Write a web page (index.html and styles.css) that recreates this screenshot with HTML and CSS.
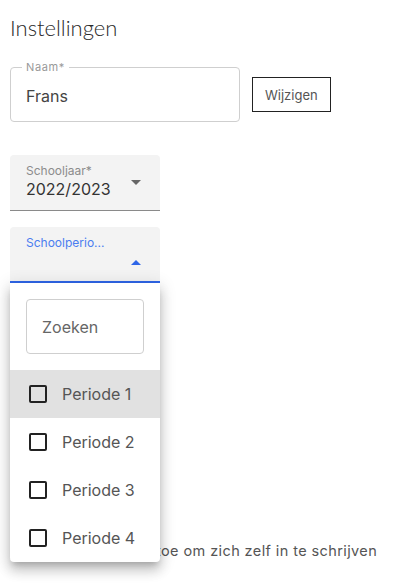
FILE: index.html
```html
<!DOCTYPE html>
<html lang="nl">
<head>
    <meta charset="UTF-8">
    <title>Instellingen</title>
    <link rel="stylesheet" href="styles.css">
</head>
<body>
    <div class="page">
        <h1 class="title">Instellingen</h1>

        <div class="name-row">
            <div class="outlined">
                <span class="outlined-label">Naam*</span>
                <div class="outlined-value">Frans</div>
            </div>
            <button class="btn">Wijzigen</button>
        </div>

        <div class="filled">
            <div class="filled-text">
                <span class="filled-label">Schooljaar*</span>
                <span class="filled-value">2022/2023</span>
            </div>
            <span class="arrow"></span>
        </div>

        <div class="select-wrap">
            <div class="filled focused">
                <div class="filled-text">
                    <span class="filled-label">Schoolperio...</span>
                </div>
                <span class="arrow up"></span>
            </div>

            <!-- open dropdown ligt over de rest -->
            <div class="panel">
                <div class="search">
                    <div class="search-box">Zoeken</div>
                </div>
                <div class="option active"><span class="check"></span>Periode 1</div>
                <div class="option"><span class="check"></span>Periode 2</div>
                <div class="option"><span class="check"></span>Periode 3</div>
                <div class="option"><span class="check"></span>Periode 4</div>
            </div>
        </div>

        <div class="toggle-row">
            <span class="check"></span>
            <span class="toggle-text">Sta leerlingen toe om zich zelf in te schrijven</span>
        </div>
    </div>
</body>
</html>
```

FILE: styles.css
```css
body{
    margin: 0;
    background: #fff;
    font-family: Inter, "Noto Sans", sans-serif;
    color: #333;
}
.page{
    padding: 0 10px 30px;
}
.title{
    margin: 0;
    padding-top: 14px;
    font-family: Lato, "Noto Sans", sans-serif;
    font-weight: 300;
    font-size: 22px;
    line-height: 28px;
    color: #2a2a2a;
}
.name-row{
    display: flex;
    align-items: center;
    gap: 12px;
    margin-top: 25px;
}
.outlined{
    position: relative;
    width: 230px;
    height: 55px;
    box-sizing: border-box;
    border: 1px solid #cfcfcf;
    border-radius: 4px;
    display: flex;
    align-items: center;
    padding: 0 15px;
}
.outlined-label{
    position: absolute;
    top: -7px;
    left: 11px;
    padding: 0 4px;
    background: #fff;
    font-size: 11px;
    line-height: 12px;
    color: #999;
    letter-spacing: 0.6px;
}
.outlined-value{
    font-size: 16px;
    color: #444;
    padding-top: 2px;
}
.btn{
    height: 35px;
    padding: 0 12px;
    border: 1px solid #222;
    background: #fff;
    font-family: Inter, "Noto Sans", sans-serif;
    font-size: 13px;
    color: #555;
    border-radius: 0;
}
.filled{
    width: 150px;
    height: 56px;
    box-sizing: border-box;
    background: #f3f3f3;
    border-radius: 4px 4px 0 0;
    border-bottom: 1px solid #8a8a8a;
    display: flex;
    align-items: center;
    padding: 0 19px 0 16px;
    margin-top: 33px;
}
.filled-text{
    flex: 1;
    display: flex;
    flex-direction: column;
    align-self: flex-start;
    padding-top: 9px;
}
.filled-label{
    font-size: 12px;
    line-height: 14px;
    color: #8c8c8c;
}
.filled-value{
    font-size: 16px;
    line-height: 20px;
    color: #333;
    margin-top: 1px;
}
.arrow{
    width: 0;
    height: 0;
    border-left: 5px solid transparent;
    border-right: 5px solid transparent;
    border-top: 5px solid #666;
}
.arrow.up{
    border-top: 0;
    border-bottom: 5px solid #2f66e8;
    margin-top: 16px;
}
.select-wrap{
    position: relative;
    margin-top: 16px;
}
.select-wrap .filled{
    margin-top: 0;
}
.focused{
    border-bottom: 2px solid #2f66e8;
}
.focused .filled-label{
    color: #4a7df0;
}
.panel{
    position: absolute;
    top: 56px;
    left: 0;
    width: 150px;
    background: #fff;
    border-radius: 0 0 4px 4px;
    box-shadow: 0 5px 6px -3px rgba(0,0,0,.2), 0 9px 12px 1px rgba(0,0,0,.14), 0 3px 16px 2px rgba(0,0,0,.12);
    z-index: 5;
}
.search{
    padding: 16px;
}
.search-box{
    height: 55px;
    box-sizing: border-box;
    border: 1px solid #cfcfcf;
    border-radius: 4px;
    display: flex;
    align-items: center;
    padding-left: 15px;
    font-size: 16px;
    color: #666;
}
.option{
    height: 48px;
    display: flex;
    align-items: center;
    padding-left: 19px;
    font-size: 16px;
    color: #555;
}
.option.active{
    background: #e1e1e1;
}
.check{
    width: 18px;
    height: 18px;
    box-sizing: border-box;
    border: 2px solid #222;
    border-radius: 2px;
    margin-right: 15px;
    flex-shrink: 0;
}
.toggle-row{
    display: flex;
    align-items: center;
    margin-top: 258px;
}
.toggle-row .check{
    margin-right: 24px;
}
.toggle-text{
    font-size: 14.5px;
    letter-spacing: 0.4px;
    color: #555;
}
```
